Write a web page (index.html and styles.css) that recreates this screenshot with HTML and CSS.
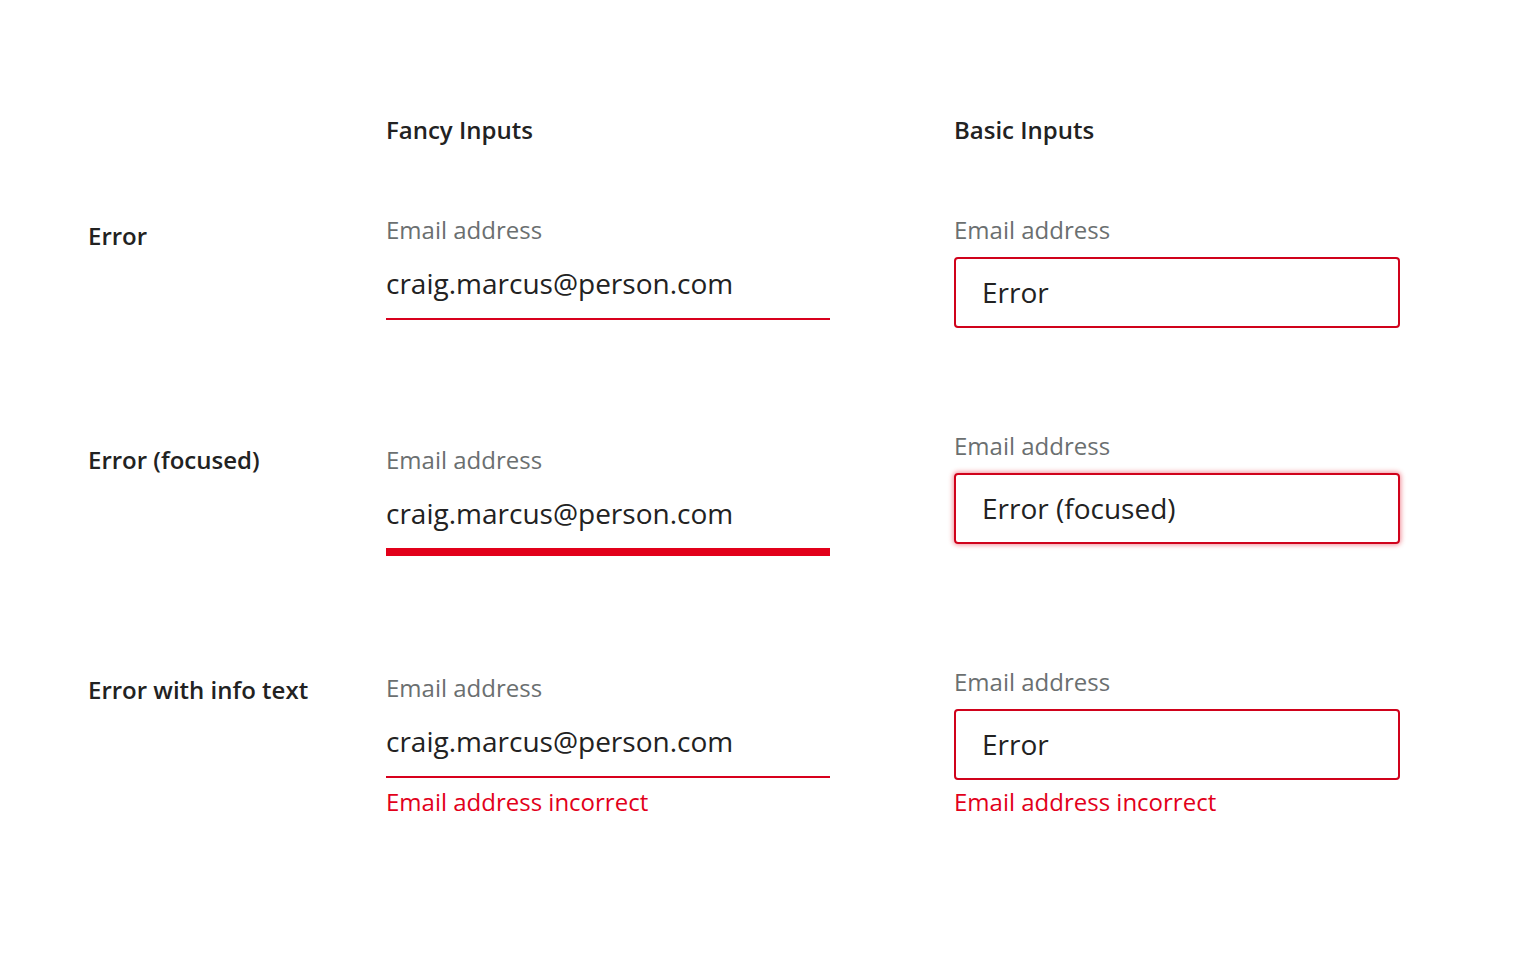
FILE: index.html
```html
<!DOCTYPE html>
<html lang="en">
<head>
<meta charset="utf-8">
<title>Error inputs</title>
<link rel="stylesheet" href="styles.css">
</head>
<body>
<main class="sheet">
  <div class="row head-row">
    <div></div>
    <h2 class="col-title">Fancy Inputs</h2>
    <h2 class="col-title">Basic Inputs</h2>
  </div>

  <div class="row row-1">
    <h3 class="state">Error</h3>
    <div class="fancy">
      <div class="label">Email address</div>
      <div class="fancy-value">craig.marcus@person.com</div>
    </div>
    <div class="basic">
      <div class="label">Email address</div>
      <div class="box">Error</div>
    </div>
  </div>

  <div class="row row-2">
    <h3 class="state shift">Error (focused)</h3>
    <div class="fancy shift">
      <div class="label">Email address</div>
      <div class="fancy-value focused">craig.marcus@person.com</div>
    </div>
    <div class="basic">
      <div class="label">Email address</div>
      <div class="box focused">Error (focused)</div>
    </div>
  </div>

  <div class="row row-3">
    <h3 class="state shift-sm">Error with info text</h3>
    <div class="fancy shift-xs">
      <div class="label">Email address</div>
      <div class="fancy-value">craig.marcus@person.com</div>
      <div class="info fancy-info">Email address incorrect</div>
    </div>
    <div class="basic">
      <div class="label">Email address</div>
      <div class="box">Error</div>
      <div class="info basic-info">Email address incorrect</div>
    </div>
  </div>
</main>
</body>
</html>
```

FILE: styles.css
```css
* { box-sizing: border-box; }
html, body { margin: 0; background: #ffffff; }
body {
  font-family: "Open Sans", "Liberation Sans", sans-serif;
  color: #222222;
}
.sheet {
  padding: 115px 0 0 88px;
}
.row {
  display: grid;
  grid-template-columns: 298px 568px 446px;
  align-items: start;
}
.row-1 { margin-top: 70px; }
.row-2 { margin-top: 103px; }
.row-3 { margin-top: 111px; }

.col-title, .state {
  margin: 0;
  font-size: 24px;
  line-height: 30px;
  font-weight: 600;
  color: #222222;
}
.row-1 .state { margin-top: 6px; }
.shift { margin-top: 14px; }
.shift-sm { margin-top: 8px; }
.shift-xs { margin-top: 6px; }

.label {
  font-size: 24px;
  line-height: 30px;
  color: #6b6f70;
}
.fancy { width: 444px; }
.fancy-value {
  margin-top: 19px;
  font-size: 28px;
  line-height: 38px;
  padding-bottom: 16px;
  border-bottom: 2px solid #d8001d;
  color: #222222;
}
.fancy-value.focused {
  border-bottom: 8px solid #e2001a;
}
.basic { width: 446px; }
.box {
  margin-top: 12px;
  height: 71px;
  border: 2px solid #d0021b;
  border-radius: 4px;
  padding: 0 26px;
  font-size: 28px;
  line-height: 66px;
  color: #222222;
}
.box.focused {
  box-shadow: 0 0 5px 1px rgba(226, 0, 26, 0.45);
}
.info {
  font-size: 24px;
  line-height: 30px;
  color: #e2001a;
}
.fancy-info { margin-top: 9px; }
.basic-info { margin-top: 7px; }
```
